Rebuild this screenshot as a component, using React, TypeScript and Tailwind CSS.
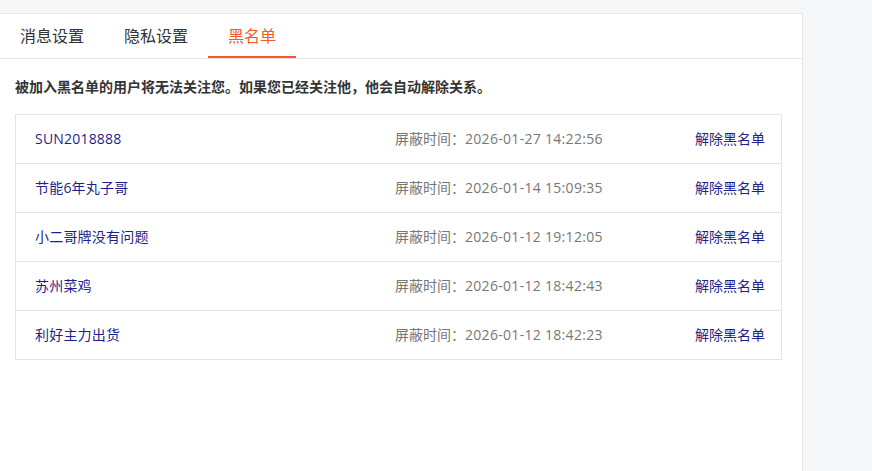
import React from "react";

const rows = [
  { name: "SUN2018888", time: "2026-01-27 14:22:56" },
  { name: "节能6年丸子哥", time: "2026-01-14 15:09:35" },
  { name: "小二哥牌没有问题", time: "2026-01-12 19:12:05" },
  { name: "苏州菜鸡", time: "2026-01-12 18:42:43" },
  { name: "利好主力出货", time: "2026-01-12 18:42:23" },
];

export default function App() {
  return (
    <div
      className="w-[872px] h-[471px] bg-[#f5f6f8] pt-[13px] overflow-hidden"
      style={{ fontFamily: '"Open Sans", "Noto Sans CJK SC", sans-serif' }}
    >
      <div className="w-[803px] h-[458px] bg-white border-t border-r border-[#e4e4e4]">
        <div className="flex h-[45px] border-b border-[#e6e6e6]">
          <div className="px-5 h-[44px] flex items-center text-[16px] text-[#333]">消息设置</div>
          <div className="px-5 h-[44px] flex items-center text-[16px] text-[#333]">隐私设置</div>
          <div className="px-5 h-[44px] flex items-center text-[16px] text-[#f5562a] border-b-2 border-[#f5562a] pt-[2px]">黑名单</div>
        </div>
        <div className="px-[15px]">
          <div className="h-[55px] flex items-center text-[14px] font-bold text-[#333]">
            被加入黑名单的用户将无法关注您。如果您已经关注他，他会自动解除关系。
          </div>
          <div className="w-[767px] border border-[#e4e4e4]">
            {rows.map((r, i) => (
              <div
                key={i}
                className={`flex items-center text-[14px] pb-[1px] ${i > 0 ? "border-t border-[#e4e4e4] h-[49px]" : "h-[48px]"}`}
              >
                <div className="pl-[19px] w-[379px] text-[#1f1f8c] tracking-[0.2px]">{r.name}</div>
                <div className="flex-1 text-[#777]">
                  屏蔽时间：<span className="tracking-[0.3px]">{r.time}</span>
                </div>
                <div className="pr-[16px] text-[#1f1f8c]">解除黑名单</div>
              </div>
            ))}
          </div>
        </div>
      </div>
    </div>
  );
}
